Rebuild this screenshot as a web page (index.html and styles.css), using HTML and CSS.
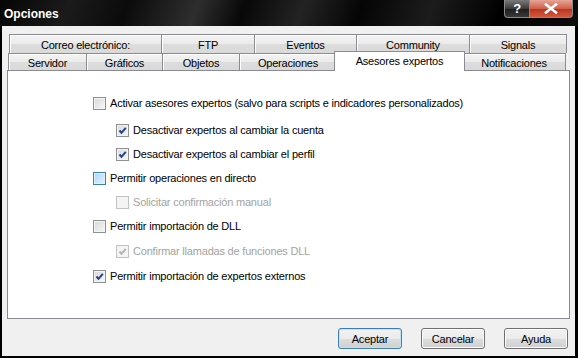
FILE: index.html
```html
<!DOCTYPE html>
<html lang="es">
<head>
    <meta charset="UTF-8">
    <title>Opciones</title>
    <link rel="stylesheet" href="styles.css">
</head>
<body>
    <div class="window">
        <div class="titlebar">
            <span class="title">Opciones</span>
            <div class="caption">
                <div class="cap help">?</div>
                <div class="cap close">
                    <svg width="16" height="11" viewBox="0 0 16 11"><path d="M3 1.5 L13 9.5 M13 1.5 L3 9.5" stroke="#fff" stroke-width="2.6" stroke-linecap="square"/></svg>
                </div>
            </div>
        </div>

        <div class="client">
            <div class="tabs">
                <div class="row row1">
                    <div class="tab t-correo">Correo electrónico:</div>
                    <div class="tab t-ftp">FTP</div>
                    <div class="tab t-eventos">Eventos</div>
                    <div class="tab t-community">Community</div>
                    <div class="tab t-signals">Signals</div>
                </div>
                <div class="row row2">
                    <div class="tab t-servidor">Servidor</div>
                    <div class="tab t-graficos">Gráficos</div>
                    <div class="tab t-objetos">Objetos</div>
                    <div class="tab t-operaciones">Operaciones</div>
                    <div class="tab active">Asesores expertos</div>
                    <div class="tab t-notif">Notificaciones</div>
                </div>
            </div>

            <div class="panel">
                <div class="opt first"><span class="cb"></span>Activar asesores expertos (salvo para scripts e indicadores personalizados)</div>
                <div class="opt sub"><span class="cb checked"><svg width="11" height="11" viewBox="0 0 11 11"><path d="M2.5 5.5 L4.5 7.8 L8.8 2.8" fill="none" stroke="#24408e" stroke-width="2"/></svg></span>Desactivar expertos al cambiar la cuenta</div>
                <div class="opt sub"><span class="cb checked"><svg width="11" height="11" viewBox="0 0 11 11"><path d="M2.5 5.5 L4.5 7.8 L8.8 2.8" fill="none" stroke="#24408e" stroke-width="2"/></svg></span>Desactivar expertos al cambiar el perfil</div>
                <div class="opt"><span class="cb hot"></span>Permitir operaciones en directo</div>
                <div class="opt sub disabled"><span class="cb"></span>Solicitar confirmación manual</div>
                <div class="opt"><span class="cb"></span>Permitir importación de DLL</div>
                <div class="opt sub disabled nudge"><span class="cb checked"><svg width="11" height="11" viewBox="0 0 11 11"><path d="M2.5 5.5 L4.5 7.8 L8.8 2.8" fill="none" stroke="#b4b4b4" stroke-width="2"/></svg></span>Confirmar llamadas de funciones DLL</div>
                <div class="opt nudge"><span class="cb checked"><svg width="11" height="11" viewBox="0 0 11 11"><path d="M2.5 5.5 L4.5 7.8 L8.8 2.8" fill="none" stroke="#24408e" stroke-width="2"/></svg></span>Permitir importación de expertos externos</div>
            </div>

            <div class="buttons">
                <div class="btn default">Aceptar</div>
                <div class="btn">Cancelar</div>
                <div class="btn">Ayuda</div>
            </div>
        </div>
    </div>
</body>
</html>
```

FILE: styles.css
```css
*{
    margin: 0;
    padding: 0;
    box-sizing: border-box;
}
body{
    background: #000;
    font-family: "Liberation Sans", Arial, sans-serif;
    font-size: 11px;
    letter-spacing: -0.2px;
    color: #000;
}
.window{
    width: 578px;
    height: 358px;
    background: #000;
    display: flex;
    flex-direction: column;
}
/* barra de titulo negra */
.titlebar{
    height: 26px;
    display: flex;
    justify-content: space-between;
    align-items: flex-start;
    background: linear-gradient(110deg, #050505 0%, #1b1b1b 12%, #0b0b0b 22%, #2e2e2e 34%, #080808 42%, #232323 52%, #050505 62%, #1c1c1c 74%, #000 86%, #0d0d0d 100%);
}
.title{
    color: #fff;
    font-weight: bold;
    font-size: 12px;
    letter-spacing: 0;
    padding: 7px 0 0 4px;
}
.caption{
    display: flex;
    margin-right: 5px;
}
.cap{
    height: 18px;
    border: 1px solid #8a8a8a;
    border-top: none;
    display: flex;
    align-items: center;
    justify-content: center;
    color: #fff;
    font-weight: bold;
    font-size: 13px;
}
.help{
    width: 26px;
    border-radius: 0 0 0 4px;
    background: linear-gradient(#7a7a7a, #3a3a3a 50%, #1c1c1c 51%, #3a3a3a);
}
.close{
    width: 43px;
    border-left: none;
    border-radius: 0 0 4px 0;
    background: linear-gradient(#e7a596, #d0604c 50%, #b8321c 51%, #d25a3e);
}
.client{
    flex: 1;
    margin: 0 3px 2px 2px;
    background: #f0f0f0;
    padding: 8px 5px 0 5px;
    display: flex;
    flex-direction: column;
}
/* pestañas en dos filas */
.row{
    display: flex;
}
.row1{
    height: 19px;
    margin-left: 2px;
}
.row2{
    height: 17px;
    margin-left: 1px;
    align-items: flex-end;
}
.tab{
    height: 100%;
    border: 1px solid #898c95;
    border-bottom: none;
    margin-left: -1px;
    background: linear-gradient(#f3f3f3, #ebebeb 50%, #dddddd 51%, #d9d9d9);
    box-shadow: inset 1px 1px 0 #fff;
    display: flex;
    align-items: center;
    justify-content: center;
    white-space: nowrap;
}
.row .tab:first-child{
    margin-left: 0;
}
.row1 .tab{
    padding-top: 1px;
}
.row2 .tab{
    padding-top: 2px;
}
.t-correo{ width: 153px; }
.t-ftp{ width: 94px; }
.t-eventos{ width: 103px; }
.t-community{ width: 114px; }
.t-signals{ width: 98px; }
.t-servidor{ width: 79px; }
.t-graficos{ width: 77px; }
.t-objetos{ width: 78px; }
.t-operaciones{ width: 98px; }
.t-notif{ width: 104px; }
.tab.active{
    width: 131px;
    height: 20px;
    margin: 0 -2px -1px -3px;
    background: #fff;
    box-shadow: none;
    z-index: 1;
    align-items: flex-start;
    padding-top: 3px;
}
.panel{
    height: 249px;
    border: 1px solid #898c95;
    background: #fff;
    padding: 20px 0 0 85px;
}
.opt{
    height: 24px;
    display: flex;
    align-items: center;
    white-space: nowrap;
}
.opt.first{
    margin-bottom: 3px;
}
.opt.nudge{
    margin-top: 1px;
}
.opt.sub{
    padding-left: 23px;
}
.opt.disabled{
    color: #a3a3a3;
}
/* casillas */
.cb{
    width: 13px;
    height: 13px;
    margin-right: 4px;
    border: 1px solid #8e8f8f;
    background: linear-gradient(135deg, #d8d8d8, #f7f7f7);
    box-shadow: inset 0 0 0 1px #f4f4f4;
    display: flex;
    align-items: center;
    justify-content: center;
}
.cb.hot{
    border-color: #3c7fb1;
    background: linear-gradient(135deg, #a9d6f5, #e6f3fc);
    box-shadow: inset 0 0 0 1px #def0fb;
}
.disabled .cb{
    border-color: #c2c2c2;
    background: #f4f4f4;
}
.buttons{
    display: flex;
    justify-content: flex-end;
    gap: 19px;
    padding: 9px 2px 0 0;
}
.btn{
    width: 64px;
    height: 21px;
    border: 1px solid #707070;
    border-radius: 3px;
    background: linear-gradient(#f2f2f2, #ebebeb 50%, #dddddd 51%, #cfcfcf);
    box-shadow: inset 0 0 0 1px #fcfcfc;
    display: flex;
    align-items: center;
    justify-content: center;
}
.btn.default{
    border-color: #3c7fb1;
    box-shadow: inset 0 0 0 1px #bfe4fa;
}
```
